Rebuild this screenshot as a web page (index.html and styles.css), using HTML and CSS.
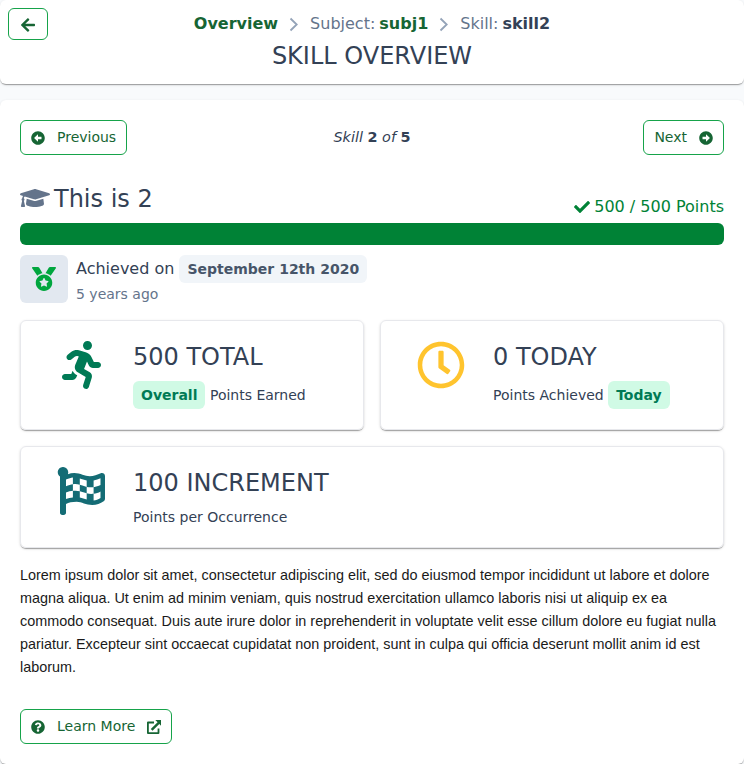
FILE: index.html
```html
<!DOCTYPE html>
<html lang="en">
<head>
<meta charset="utf-8">
<title>Skill Overview</title>
<link rel="stylesheet" href="styles.css">
</head>
<body>
<header class="card page-header">
  <button class="btn back" aria-label="Back"><svg width="14" height="16" viewBox="0 0 448 512"><path d="M257.500 445.100l-22.200 22.200c-9.400 9.400-24.600 9.400-33.900 0L7 273c-9.400-9.400-9.400-24.600 0-33.900L201.400 44.700c9.400-9.400 24.600-9.400 33.900 0l22.200 22.200c9.500 9.500 9.300 25-.4 34.300L136.600 216H424c13.300 0 24 10.700 24 24v32c0 13.300-10.700 24-24 24H136.600l120.500 114.800c9.800 9.300 10 24.800.4 34.300z"/></svg></button>
  <div class="heading">
    <nav class="crumbs">
      <a>Overview</a>
      <svg class="chev" width="10" height="16" viewBox="0 0 10 16"><path d="M1.500 2.500l6.200 6-6.200 6"/></svg>
      <span class="crumb"><span>Subject:</span><a>subj1</a></span>
      <svg class="chev" width="10" height="16" viewBox="0 0 10 16"><path d="M1.500 2.500l6.200 6-6.200 6"/></svg>
      <span class="crumb"><span>Skill:</span><b>skill2</b></span>
    </nav>
    <h1>SKILL OVERVIEW</h1>
  </div>
</header>
<main class="card content">
  <div class="pager">
    <button class="btn"><svg width="14" height="14" viewBox="0 0 512 512"><path d="M256 504C119 504 8 393 8 256S119 8 256 8s248 111 248 248-111 248-248 248zm116-292H256v-70.900c0-10.700-13-16.100-20.500-8.500L121.200 247.500c-4.700 4.700-4.700 12.200 0 16.900l114.300 114.900c7.600 7.600 20.500 2.200 20.500-8.500V300h116c6.600 0 12-5.400 12-12v-64c0-6.600-5.400-12-12-12z"/></svg><span>Previous</span></button>
    <div class="position"><i>Skill</i> <b>2</b> <i>of</i> <b>5</b></div>
    <button class="btn next"><span>Next</span><svg class="flip" width="14" height="14" viewBox="0 0 512 512"><path d="M256 504C119 504 8 393 8 256S119 8 256 8s248 111 248 248-111 248-248 248zm116-292H256v-70.900c0-10.700-13-16.100-20.500-8.500L121.200 247.500c-4.700 4.700-4.700 12.200 0 16.900l114.300 114.900c7.600 7.600 20.500 2.200 20.500-8.500V300h116c6.600 0 12-5.400 12-12v-64c0-6.600-5.400-12-12-12z"/></svg></button>
  </div>
  <div class="title-row">
    <h2><svg width="30" height="24" viewBox="0 0 640 512"><path d="M622.340 153.200L343.400 67.500c-15.200-4.670-31.600-4.670-46.790 0L17.660 153.200c-23.540 7.230-23.540 38.360 0 45.590l48.630 14.940c-10.670 13.190-17.230 29.280-17.880 46.900C38.780 266.150 32 276.110 32 288c0 10.780 5.680 19.850 13.860 25.650L20.330 428.530C18.110 438.520 25.710 448 35.940 448h56.110c10.240 0 17.840-9.480 15.620-19.470L82.140 313.650C90.320 307.850 96 298.780 96 288c0-11.570-6.470-21.250-15.660-26.870.76-15.020 8.440-28.300 20.690-36.720L296.600 284.500c9.060 2.780 26.440 6.250 46.790 0l278.950-85.700c23.550-7.240 23.550-38.360 0-45.600zM352.790 315.090c-28.530 8.760-52.840 3.920-65.590 0l-145.020-44.550L128 384c0 35.350 85.960 64 192 64s192-28.650 192-64l-14.180-113.470-145.030 44.560z"/></svg><span>This is 2</span></h2>
    <div class="points"><svg width="16" height="16" viewBox="0 0 512 512"><path d="M173.898 439.404l-166.400-166.400c-9.997-9.997-9.997-26.206 0-36.204l36.203-36.204c9.997-9.998 26.207-9.998 36.204 0L192 312.690 432.095 72.596c9.997-9.997 26.207-9.997 36.204 0l36.203 36.204c9.997 9.997 9.997 26.206 0 36.204l-294.400 294.401c-9.998 9.997-26.207 9.997-36.204-.001z"/></svg><span>500 / 500 Points</span></div>
  </div>
  <div class="bar"></div>
  <div class="achieved">
    <div class="medal"><svg width="24" height="24" viewBox="0 0 512 512"><path d="M223.750 130.750L154.620 15.540A31.997 31.997 0 0 0 127.180 0H16.030C3.080 0-4.500 14.570 2.920 25.180l111.270 158.960c29.720-27.770 67.520-46.830 109.560-53.390zM495.970 0H384.820c-11.240 0-21.660 5.900-27.440 15.540l-69.130 115.210c42.040 6.560 79.840 25.620 109.560 53.380L509.080 25.180C516.500 14.570 508.920 0 495.970 0zM256 160c-97.200 0-176 78.800-176 176s78.800 176 176 176 176-78.800 176-176-78.800-176-176-176zm92.520 157.260l-37.930 36.960 8.970 52.220c1.600 9.360-8.260 16.510-16.650 12.090L256 393.880l-46.900 24.650c-8.400 4.450-18.250-2.740-16.650-12.090l8.970-52.220-37.930-36.960c-6.820-6.640-3.050-18.230 6.350-19.590l52.430-7.640 23.430-47.520c2.110-4.280 6.190-6.390 10.280-6.390 4.110 0 8.220 2.140 10.330 6.390l23.430 47.520 52.430 7.640c9.400 1.360 13.170 12.950 6.350 19.590z"/></svg></div>
    <div>
      <div class="when">Achieved on <span class="tag date">September 12th 2020</span></div>
      <div class="ago">5 years ago</div>
    </div>
  </div>
  <div class="stats">
    <section class="stat">
      <div class="icon run"><svg width="39" height="48" viewBox="0 0 416 512"><path d="M272 96c26.510 0 48-21.490 48-48S298.510 0 272 0s-48 21.490-48 48 21.490 48 48 48zM113.690 317.470l-14.800 34.520H32c-17.670 0-32 14.330-32 32s14.330 32 32 32h77.450c19.250 0 36.580-11.440 44.110-29.090l8.790-20.520-10.670-6.300c-17.320-10.230-30.060-25.370-37.990-42.610zM384 223.990h-44.030l-26.060-53.250c-12.500-25.550-35.450-44.230-61.780-50.940l-71.080-21.140c-28.300-6.800-57.770-.55-80.840 17.140l-39.670 30.410c-14.030 10.750-16.690 30.830-5.940 44.860s30.840 16.690 44.860 5.940l39.670-30.410c7.670-5.890 17.440-8 25.270-6.140l14.700 4.370-37.460 87.390c-12.620 29.480-1.310 64.010 26.300 80.310l84.980 50.170-27.470 87.730c-5.280 16.860 4.110 34.820 20.970 40.090 3.190 1 6.410 1.480 9.580 1.480 13.610 0 26.230-8.770 30.520-22.450l31.640-101.060c5.910-20.770-2.890-43.080-21.640-54.390l-61.240-36.140 31.310-78.280 20.270 41.430c8 16.340 24.920 26.890 43.110 26.890H384c17.670 0 32-14.330 32-32s-14.330-31.990-32-31.990z"/></svg></div>
      <div><div class="num">500 TOTAL</div><div class="label"><span class="tag">Overall</span> Points Earned</div></div>
    </section>
    <section class="stat">
      <div class="icon clock"><svg width="48" height="48" viewBox="0 0 512 512"><path d="M256 8C119 8 8 119 8 256s111 248 248 248 248-111 248-248S393 8 256 8zm0 448c-110.500 0-200-89.500-200-200S145.500 56 256 56s200 89.500 200 200-89.500 200-200 200zm61.800-104.400l-84.900-61.700c-3.100-2.300-4.900-5.900-4.900-9.700V116c0-6.600 5.400-12 12-12h32c6.600 0 12 5.400 12 12v141.700l66.800 48.600c5.400 3.900 6.500 11.400 2.600 16.800L334.600 349c-3.900 5.300-11.400 6.500-16.800 2.600z"/></svg></div>
      <div><div class="num">0 TODAY</div><div class="label">Points Achieved <span class="tag">Today</span></div></div>
    </section>
    <section class="stat wide">
      <div class="icon flag"><svg width="48" height="48" viewBox="0 0 512 512"><path d="M243.200 189.900V258c26.100 5.900 49.300 15.600 73.600 22.300v-68.200c-26-5.800-49.400-15.500-73.600-22.200zm223.300-123c-34.300 15.900-76.500 31.900-117 31.900C296 98.800 251.700 64 184.300 64c-25 0-47.300 4.400-68 12 2.800-7.300 4.100-15.200 3.600-23.600C118.100 24 94.800 1.200 66.300 0 34.300-1.300 8 24.300 8 56c0 19 9.500 35.800 24 45.900V488c0 13.300 10.700 24 24 24h16c13.300 0 24-10.700 24-24v-94.400c28.300-12.100 63.600-22.100 114.400-22.100 53.600 0 97.800 34.800 165.200 34.800 48.200 0 86.700-16.300 122.500-40.900 8.700-6 13.800-15.800 13.800-26.400V95.900c.1-23.300-24.200-38.800-45.400-29zM169.600 325.500c-25.800 2.700-50 8.200-73.600 16.600v-70.500c26.200-9.300 47.500-15 73.600-17.400v71.300zM464 191c-23.600 9.800-46.300 19.500-73.600 23.900V286c24.800-3.400 51.400-11.800 73.600-26v70.500c-25.100 16.100-48.500 24.700-73.600 27.100V286c-27 3.700-47.900 1.500-73.600-5.600v67.400c-23.900-7.400-47.300-16.700-73.600-21.300V258c-19.700-4.400-40.800-6.800-73.600-3.800v-70c-22.400 3.100-44.600 10.200-73.600 20.900v-70.500c33.200-12.200 50.100-19.800 73.600-22v71.600c27-3.700 48.400-1.300 73.600 5.700v-67.400c23.700 7.400 47.200 16.700 73.600 21.300v68.400c23.700 5.300 47.600 6.900 73.600 2.700V143c27-4.800 52.300-13.600 73.600-22.500z"/></svg></div>
      <div><div class="num">100 INCREMENT</div><div class="label">Points per Occurrence</div></div>
    </section>
  </div>
  <p class="description">Lorem ipsum dolor sit amet, consectetur adipiscing elit, sed do eiusmod tempor incididunt ut labore et dolore magna aliqua. Ut enim ad minim veniam, quis nostrud exercitation ullamco laboris nisi ut aliquip ex ea commodo consequat. Duis aute irure dolor in reprehenderit in voluptate velit esse cillum dolore eu fugiat nulla pariatur. Excepteur sint occaecat cupidatat non proident, sunt in culpa qui officia deserunt mollit anim id est laborum.</p>
  <button class="btn"><svg width="14" height="14" viewBox="0 0 512 512"><path d="M504 256c0 136.997-111.043 248-248 248S8 392.997 8 256C8 119.083 119.043 8 256 8s248 111.083 248 248zM262.655 90c-54.497 0-89.255 22.957-116.549 63.758-3.536 5.286-2.353 12.415 2.715 16.258l34.699 26.310c5.205 3.947 12.621 3.008 16.665-2.122 17.864-22.658 30.113-35.797 57.303-35.797 20.429 0 45.698 13.148 45.698 32.958 0 14.976-12.363 22.667-32.534 33.976C247.128 238.528 216 254.941 216 296v4c0 6.627 5.373 12 12 12h56c6.627 0 12-5.373 12-12v-1.333c0-28.462 83.186-29.647 83.186-106.667 0-58.002-60.165-102-116.531-102zM256 338c-25.365 0-46 20.635-46 46 0 25.364 20.635 46 46 46s46-20.636 46-46c0-25.365-20.635-46-46-46z"/></svg><span>Learn More</span><svg width="14" height="14" viewBox="0 0 14 14"><path d="M8.300 0H14v5.700l-1.700-1.700-6.800 6.800-1.700-1.700 6.800-6.800zM1 1.600h6v1.800H1.800v8.800h8.800V8.500h1.800v4.500q0 1-1 1H1q-1 0-1-1V2.600q0-1 1-1z"/></svg></button>
</main>
</body>
</html>
```

FILE: styles.css
```css
* { box-sizing: border-box; }
body { margin: 0; background: #f8fafc; color: #334155; font: 16px/24px "DejaVu Sans", sans-serif; }
svg { display: block; flex: none; fill: currentColor; }
h1, h2 { margin: 0; font-size: 24px; font-weight: 400; line-height: 32px; }
.card { background: #fff; border-radius: 6px; box-shadow: 0 2px 1px -1px rgba(0,0,0,.2), 0 1px 1px rgba(0,0,0,.14), 0 1px 3px rgba(0,0,0,.12); }
.page-header { display: grid; grid-template-columns: 40px 1fr 40px; height: 84px; padding: 8px; margin-bottom: 16px; }
.heading { text-align: center; padding-top: 4px; }
.crumbs { display: flex; justify-content: center; gap: 11px; height: 24px; color: #64748b; white-space: nowrap; }
.crumb { display: flex; gap: 4px; }
.crumbs a { color: #166534; font-weight: 700; }
.crumbs b { color: #334155; }
.chev { margin-top: 4px; fill: none; stroke: #94a3b8; stroke-width: 1.800; }
h1 { margin-top: 4px; }
.btn { display: inline-flex; align-items: center; gap: 12px; height: 35px; padding: 0 10px; border: 1px solid #16a34a; border-radius: 6px; background: #fff; color: #166534; font: 14px/21px "DejaVu Sans", sans-serif; }
.back { width: 40px; height: 32px; padding: 1px 0 0; justify-content: center; }
.content { height: 664px; padding: 20px; }
.pager { display: grid; grid-template-columns: 1fr auto 1fr; align-items: center; justify-items: start; }
.next { justify-self: end; }
.position { padding-bottom: 1px; font-size: 14.400px; }
.flip { transform: scaleX(-1); }
.title-row { display: flex; justify-content: space-between; align-items: flex-end; height: 40px; margin-top: 24px; margin-bottom: 4px; }
h2 { display: flex; align-items: center; gap: 4px; height: 40px; }
h2 svg { margin-bottom: 2px; color: #64748b; }
.points { display: flex; align-items: center; gap: 4px; color: #008236; }
.bar { height: 22px; border-radius: 6px; background: #008236; }
.achieved { display: flex; gap: 8px; margin-top: 10px; }
.medal { display: flex; align-items: center; justify-content: center; width: 48px; height: 48px; border-radius: 6px; background: #e2e8f0; color: #00a63e; }
.when { height: 28px; line-height: 28px; }
.ago { margin-top: 1px; font-size: 14px; line-height: 21px; color: #64748b; }
.tag { display: inline-block; padding: 0 8px; border-radius: 6px; background: #d0fae5; color: #007a55; font-size: 14px; font-weight: 700; line-height: 28px; }
.date { background: #f1f5f9; color: #475569; vertical-align: top; }
.stats { display: grid; grid-template-columns: 1fr 1fr; gap: 16px; margin-top: 15px; }
.stat { display: grid; grid-template-columns: 72px 1fr; gap: 16px; height: 110px; padding: 20px 22px 18px 24px; border: 1px solid #e7e8ec; border-radius: 6px; box-shadow: 0 2px 1px -1px rgba(0,0,0,.2), 0 1px 1px rgba(0,0,0,.14), 0 1px 3px rgba(0,0,0,.12); }
.wide { grid-column: span 2; height: 102px; }
.icon { display: flex; justify-content: center; }
.run { color: #007a55; }
.clock { color: #ffc42e; }
.flag { color: #146c75; }
.num { font-size: 24px; line-height: 32px; }
.label { margin-top: 8px; font-size: 14px; line-height: 28px; white-space: nowrap; }
.wide .label { margin-top: 4px; }
.description { margin: 16px 0 30px; color: #1a1a1a; font: 14.400px/23px "Liberation Sans", sans-serif; }
```
